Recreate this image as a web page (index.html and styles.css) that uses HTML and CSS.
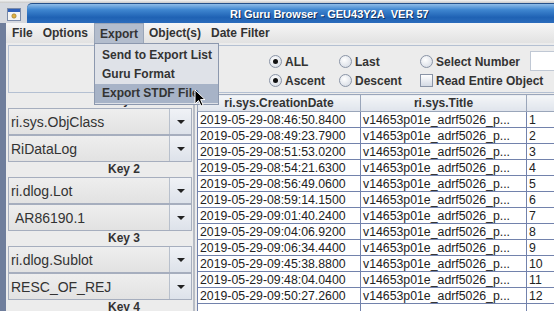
FILE: index.html
```html
<!DOCTYPE html>
<html lang="en">
<head>
    <meta charset="UTF-8">
    <title>RI Guru Browser</title>
    <link rel="stylesheet" href="styles.css">
</head>
<body>
    <div class="desk"></div>
    <div class="window">
        <div class="titlebar">
            <span class="ticon">
                <svg width="14" height="13" viewBox="0 0 14 13">
                    <rect x="0.5" y="0.5" width="13" height="12" fill="#f4f4f4" stroke="#7a8aa8"/>
                    <rect x="1" y="1" width="12" height="3" fill="#2f5fb8"/>
                    <circle cx="7" cy="8" r="2.2" fill="#e0b040" stroke="#8a7030" stroke-width="0.6"/>
                </svg>
            </span>
            <div class="tbar"><span class="title">RI Guru Browser - GEU43Y2A&nbsp;&nbsp;VER 57</span></div>
        </div>

        <div class="menubar">
            <span class="mitem">File</span>
            <span class="mitem">Options</span>
            <span class="mitem active">Export</span>
            <span class="mitem">Object(s)</span>
            <span class="mitem">Date Filter</span>
        </div>

        <div class="content">
            <div class="options">
                <div class="opt"><span class="radio on"></span>ALL</div>
                <div class="opt"><span class="radio"></span>Last</div>
                <div class="opt"><span class="radio"></span>Select Number</div>
                <div class="opt"><span class="field"></span></div>
                <div class="opt"><span class="radio on"></span>Ascent</div>
                <div class="opt"><span class="radio"></span>Descent</div>
                <div class="opt wide"><span class="check"></span>Read Entire Object</div>
            </div>

            <div class="main">
                <div class="keys">
                    <div class="keylabel">Key 1</div>
                    <div class="combo"><span class="val">ri.sys.ObjClass</span><span class="arrow"></span></div>
                    <div class="combo"><span class="val">RiDataLog</span><span class="arrow"></span></div>
                    <div class="keylabel">Key 2</div>
                    <div class="combo"><span class="val">ri.dlog.Lot</span><span class="arrow"></span></div>
                    <div class="combo"><span class="val indent">AR86190.1</span><span class="arrow"></span></div>
                    <div class="keylabel">Key 3</div>
                    <div class="combo"><span class="val">ri.dlog.Sublot</span><span class="arrow"></span></div>
                    <div class="combo"><span class="val">RESC_OF_REJ</span><span class="arrow"></span></div>
                    <div class="keylabel">Key 4</div>
                </div>
                <div class="split"></div>
                <div class="tablewrap">
                    <table>
                        <thead>
                            <tr>
                                <th class="c1">ri.sys.CreationDate</th>
                                <th class="c2">ri.sys.Title</th>
                                <th class="c3"></th>
                            </tr>
                        </thead>
                        <tbody>
                            <tr><td>2019-05-29-08:46:50.8400</td><td>v14653p01e_adrf5026_p...</td><td>1</td></tr>
                            <tr><td>2019-05-29-08:49:23.7900</td><td>v14653p01e_adrf5026_p...</td><td>2</td></tr>
                            <tr><td>2019-05-29-08:51:53.0200</td><td>v14653p01e_adrf5026_p...</td><td>3</td></tr>
                            <tr><td>2019-05-29-08:54:21.6300</td><td>v14653p01e_adrf5026_p...</td><td>4</td></tr>
                            <tr><td>2019-05-29-08:56:49.0600</td><td>v14653p01e_adrf5026_p...</td><td>5</td></tr>
                            <tr><td>2019-05-29-08:59:14.1500</td><td>v14653p01e_adrf5026_p...</td><td>6</td></tr>
                            <tr><td>2019-05-29-09:01:40.2400</td><td>v14653p01e_adrf5026_p...</td><td>7</td></tr>
                            <tr><td>2019-05-29-09:04:06.9200</td><td>v14653p01e_adrf5026_p...</td><td>8</td></tr>
                            <tr><td>2019-05-29-09:06:34.4400</td><td>v14653p01e_adrf5026_p...</td><td>9</td></tr>
                            <tr><td>2019-05-29-09:45:38.8800</td><td>v14653p01e_adrf5026_p...</td><td>10</td></tr>
                            <tr><td>2019-05-29-09:48:04.0400</td><td>v14653p01e_adrf5026_p...</td><td>11</td></tr>
                            <tr><td>2019-05-29-09:50:27.2600</td><td>v14653p01e_adrf5026_p...</td><td>12</td></tr>
                            <tr class="blank"><td></td><td></td><td></td></tr>
                        </tbody>
                    </table>
                </div>
            </div>
        </div>

        <!-- open Export menu -->
        <div class="popup">
            <div class="pitem">Send to Export List</div>
            <div class="pitem">Guru Format</div>
            <div class="pitem sel">Export STDF File</div>
        </div>

        <svg class="cursor" width="12" height="18" viewBox="0 0 12 18">
            <path d="M1 1 L1 15 L4.5 11.5 L7 17 L9 16 L6.6 10.6 L11 10.6 Z" fill="#000" stroke="#fff" stroke-width="1"/>
        </svg>
    </div>
</body>
</html>
```

FILE: styles.css
```css
:root {
    --frame: #6f7e9c;
    --panel: #ececec;
    --grid: #7282ac;
    --line: #b4c0d2;
}
html, body {
    margin: 0;
    padding: 0;
    width: 554px;
    height: 311px;
    overflow: hidden;
    background: #dcdcdc;
    font-family: 'Liberation Sans', Arial, sans-serif;
    color: #222;
}
.desk {
    height: 3px;
    background: linear-gradient(#f4f4f4, #c8c8c8);
}
.window {
    position: relative;
    height: 308px;
    background: var(--panel);
}
.titlebar {
    display: flex;
    height: 20px;
    background: #d6d9df;
}
.ticon {
    width: 27px;
    display: flex;
    align-items: center;
    justify-content: center;
    padding-top: 2px;
    box-sizing: border-box;
}
.tbar {
    flex: 1;
    border-radius: 5px 0 0 0;
    background: linear-gradient(#8fbce8 0%, #3f86d0 30%, #1f62b4 70%, #2b6cbc 100%);
    border-top: 1px solid #24508a;
    display: flex;
    align-items: center;
}
.title {
    margin-left: 203px;
    color: #fff;
    font-size: 11px;
    font-weight: bold;
    text-shadow: 1px 1px 0 #12305a;
    white-space: nowrap;
}
.menubar {
    display: flex;
    height: 20px;
    padding-left: 1px;
    background: linear-gradient(#f6f6f6, #e2e2e2);
    border-left: 6px solid var(--frame);
    font-size: 12px;
    font-weight: bold;
    color: #333;
}
.mitem {
    display: flex;
    align-items: center;
    padding: 0 5px;
}
.mitem.active {
    background: #b3bdcd;
    border: 1px solid #9aa6b8;
    border-bottom: none;
    margin-left: 1px;
    padding: 0 5px 0 5px;
}
.content {
    border-left: 6px solid var(--frame);
    height: 268px;
    padding: 2px 0 0 2px;
    box-sizing: border-box;
}
.options {
    display: grid;
    grid-template-columns: 70px 81px 110px 1fr;
    grid-template-rows: 19px 19px;
    align-items: center;
    height: 48px;
    padding: 6px 0 0 260px;
    box-sizing: border-box;
    border: 1px solid var(--line);
    border-right: none;
    font-size: 12px;
    font-weight: bold;
    color: #333;
}
.opt {
    display: flex;
    align-items: center;
    gap: 3px;
    white-space: nowrap;
}
.radio {
    flex: none;
    width: 11px;
    height: 11px;
    border-radius: 50%;
    border: 1px solid #8a94a6;
    background: radial-gradient(circle at 40% 35%, #ffffff, #d0d6e0);
    position: relative;
}
.radio.on::after {
    content: "";
    position: absolute;
    left: 3px;
    top: 3px;
    width: 5px;
    height: 5px;
    border-radius: 50%;
    background: #111;
}
.check {
    flex: none;
    width: 11px;
    height: 11px;
    border: 1px solid #8a94a6;
    background: linear-gradient(#ffffff, #d4dae4);
}
.field {
    display: block;
    width: 30px;
    height: 18px;
    margin-top: -2px;
    background: #fff;
    border: 1px solid #c0c8d4;
}
.main {
    display: flex;
    height: 218px;
}
.keys {
    width: 184px;
    flex: none;
    display: flex;
    flex-direction: column;
}
.keylabel {
    height: 15px;
    flex: none;
    text-align: center;
    padding-left: 48px;
    box-sizing: border-box;
    font-size: 12px;
    font-weight: bold;
    line-height: 15px;
    color: #333;
}
.combo {
    height: 27px;
    flex: none;
    display: flex;
    border: 1px solid #a6aebe;
    box-sizing: border-box;
    background: linear-gradient(#eeeeee, #e2e2e2);
}
.val {
    flex: 1;
    display: flex;
    align-items: center;
    padding-left: 2px;
    font-size: 14px;
    color: #333;
    white-space: nowrap;
}
.val.indent {
    padding-left: 6px;
}
.arrow {
    width: 21px;
    border-left: 1px solid #b8c0cc;
    background: linear-gradient(#f0f2f6, #dde2ea);
    position: relative;
}
.arrow::after {
    content: "";
    position: absolute;
    left: 7px;
    top: 11px;
    border-left: 4px solid transparent;
    border-right: 4px solid transparent;
    border-top: 4px solid #222;
}
.split {
    width: 5px;
    flex: none;
    background-image: radial-gradient(circle, #9aa2b0 0.6px, transparent 0.9px);
    background-size: 2px 2px;
    background-repeat: repeat-y;
    background-position: 1px 0;
}
.tablewrap {
    flex: 1;
    overflow: hidden;
    padding-top: 1px;
}
table {
    border-collapse: collapse;
    table-layout: fixed;
    width: 380px;
    font-size: 12.3px;
}
th {
    height: 16px;
    padding: 0;
    font-size: 12px;
    font-weight: bold;
    color: #333;
    background: linear-gradient(#f4f6f8, #dfe4ec);
    border: 1px solid #9aa6ba;
    text-align: center;
}
.c1 { width: 162px; }
.c2 { width: 165px; }
tbody tr {
    height: 16px;
}
td {
    padding: 0 0 0 2px;
    background: #fff;
    border: 1px solid var(--grid);
    white-space: nowrap;
    overflow: hidden;
    color: #222;
    line-height: 14px;
}
.popup {
    position: absolute;
    left: 94px;
    top: 40px;
    width: 125px;
    padding: 2px 0 1px;
    background: #dfe2e8;
    border: 1px solid #8c98ae;
    box-sizing: border-box;
    font-size: 12px;
    font-weight: bold;
    color: #333;
}
.pitem {
    height: 19px;
    line-height: 19px;
    padding-left: 7px;
    white-space: nowrap;
}
.pitem.sel {
    background: #a7b3c7;
}
.cursor {
    position: absolute;
    left: 194px;
    top: 86px;
}
```
